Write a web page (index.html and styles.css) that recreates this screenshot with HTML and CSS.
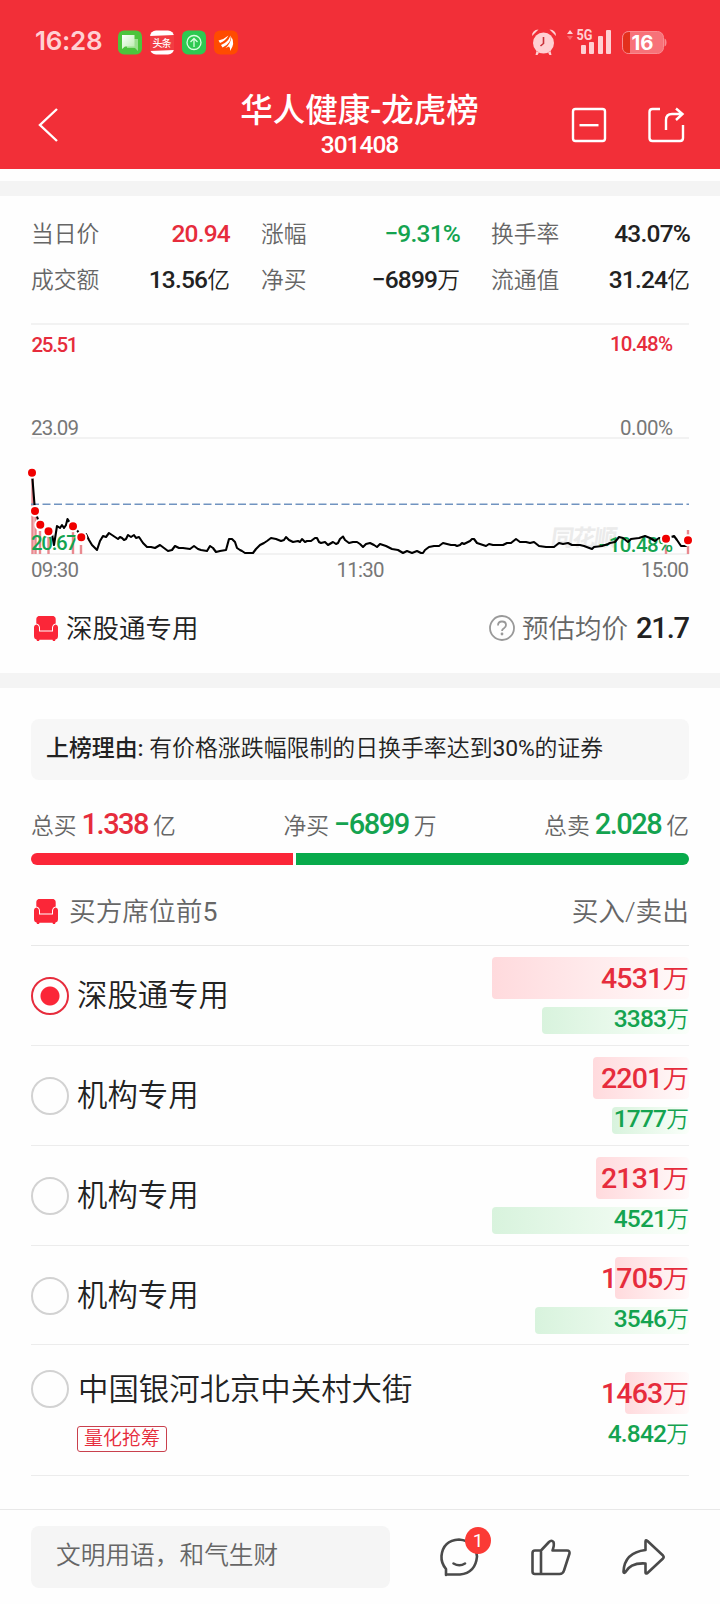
FILE: index.html
```
<!DOCTYPE html>
<html lang="zh-CN">
  <head>
    <meta charset="utf-8">
    <title>华人健康-龙虎榜</title>
    <link rel="stylesheet" href="styles.css">
  </head>
  <body>
    <header>
      <div class="status">
        <span class="clock">16:28</span>
        <svg class="apps" width="122" height="26" viewBox="117 28 122 26">
          <defs>
            <linearGradient id="bubble" x1="0" y1="0" x2="1" y2="1">
              <stop offset="0" stop-color="#fff"/>
              <stop offset="1" stop-color="#b9ecae"/>
            </linearGradient>
          </defs>
          <rect x="118" y="29.500" width="24" height="24" rx="6" fill="#4cc43c"/>
          <path d="M127 38h11v12l-3-3h-8z" fill="#9be08f"/>
          <path d="M122 34h12.500v11.500H125l-3 2.500z" fill="url(#bubble)"/>
          <rect x="150" y="29.500" width="24" height="24" rx="6" fill="#fff"/>
          <path d="M150 35l24-1v15l-24 1z" fill="#f23c42"/>
          <text class="app-name" x="152.500" y="46" textLength="19">头条</text>
          <rect x="182" y="29.500" width="24" height="24" rx="6" fill="#2ec951"/>
          <g fill="none" stroke="#d8ffe0" stroke-width="1.300">
            <circle cx="194" cy="41.500" r="7"/>
            <path d="M194 46v-8.500M190.500 41l3.500-3.500 3.500 3.500"/>
          </g>
          <rect x="214" y="29.500" width="24" height="24" rx="6" fill="#ff4b00"/>
          <path d="M218.500 39.500q6-1.500 10-5-3 5.500-8.500 7.500zM221 44q7-2.500 9.500-9.500 1.500 7.500-8 12zM225.500 47q5-4 6-11 4 6.500-1.500 14 .500-3.500-1-4.500z" fill="#fff"/>
        </svg>
        <svg class="signal" width="138" height="30" viewBox="530 26 138 30">
          <g fill="#ffd0d3">
            <circle cx="543.500" cy="42" r="10.500"/>
            <path d="M532 35q0-6 6.500-6.500zM556 35q0-6-6.500-6.500z"/>
            <path d="M536.500 50l2.500 1.500-1.500 2.500-2 0zM550.500 50l-2.500 1.500 1.500 2.500 2 0z"/>
            <path d="M567 33l3-4 3 4z"/>
            <rect x="581" y="44" width="5" height="9" rx="1"/>
            <rect x="589" y="41" width="5" height="12" rx="1"/>
            <rect x="598" y="35" width="5" height="18" rx="1"/>
            <rect x="606" y="29" width="5" height="24" rx="1"/>
          </g>
          <path d="M543.500 36v6.500l-3 2.500" fill="none" stroke="#c9313a" stroke-width="1.600"/>
          <path d="M567 35l3 4 3-4z" fill="#f8686e"/>
          <text class="net" x="576.500" y="38.500" textLength="16" lengthAdjust="spacingAndGlyphs">5G</text>
          <rect x="622.500" y="30.500" width="41" height="22" rx="6" fill="#f77279" stroke="#f98b90"/>
          <path d="M630 31v21h-1q-6 0-6-6v-9q0-6 6-6z" fill="#e2301c"/>
          <path d="M664.500 37.500q2 .500 2 4t-2 4z" fill="#f98b90"/>
          <text class="charge" x="631.500" y="49" textLength="22" lengthAdjust="spacingAndGlyphs">16</text>
        </svg>
      </div>
      <div class="nav">
        <svg class="back" width="22" height="38" viewBox="37 106 22 38">
          <path d="M57 109L40 125l17 16"/>
        </svg>
        <div class="title">
          <h1>华人健康-龙虎榜</h1>
          <p>301408</p>
        </div>
        <svg class="nav-icons" width="114" height="38" viewBox="571 106 114 38">
          <rect x="573" y="109" width="32" height="32" rx="2.500"/>
          <path d="M579.500 125.200h19"/>
          <path d="M660 109h-7.500q-3 0-3 3v26q0 3 3 3h27.500q3 0 3-3v-13"/>
          <path d="M666 130v-10q0-6 6-6h10M676 108.500l6.500 5.500-6.500 6"/>
        </svg>
      </div>
    </header>
    <div class="gap"></div>

    <section class="quote">
      <dl>
        <div><dt>当日价</dt><dd class="buy">20.94</dd></div>
        <div><dt>涨幅</dt><dd class="sell">−9.31%</dd></div>
        <div><dt>换手率</dt><dd>43.07%</dd></div>
        <div><dt>成交额</dt><dd>13.56<small>亿</small></dd></div>
        <div><dt>净买</dt><dd>−6899<small>万</small></dd></div>
        <div><dt>流通值</dt><dd>31.24<small>亿</small></dd></div>
      </dl>
      <svg class="chart" width="658" height="260" viewBox="31 323 658 260">
        <g class="grid">
          <path d="M31 324h658M31 438h658M31 554h658"/>
        </g>
        <text class="watermark" transform="translate(550 546) skewX(-8)" textLength="66">同花顺</text>
        <g class="volume">
          <path d="M32.500 478v76M35.500 516v38M40 531v23M48.500 536v18M73 532v22M81 545v9M666 545v9M688 530v24"/>
        </g>
        <g class="labels">
          <text class="up" x="31.500" y="352" textLength="47">25.51</text>
          <text class="up" x="610" y="350.500" textLength="63">10.48%</text>
          <text x="31" y="435" textLength="48">23.09</text>
          <text x="620" y="435" textLength="53">0.00%</text>
          <text class="down" x="31" y="549.500" textLength="47">20.67</text>
          <text class="down" x="598" y="551.500" textLength="75">−10.48%</text>
          <text x="31" y="577" textLength="48">09:30</text>
          <text x="336.500" y="577" textLength="48">11:30</text>
          <text x="641" y="577" textLength="48">15:00</text>
        </g>
        <path class="average" d="M31 504.300h658"/>
        <polyline class="price" points="32,473 35,511 40,525 48,531 52,534 54,545 57,526 60,528 62,525 64,528 66,525 67.500,519 70,523 73,526 77,530 81,537 83,535 86,534 89,540 92,545 97,550 100,541 103,536 106,537 109,533 112,535 115,537 118,539 120,537 122,538 124,540 126,539 128,535 131,537 134,535 136,538 139,537 143,543 147,547 151,547 155,548 160,545 164,548 168,551 172,550 175,546 179,548 183,548 190,549 194,546 198,549 201,550 207,551 210,546 213,548 216,552 220,551 226,550 229,539 232,539 235,542 237,548 240,550 242,551 245,553 253,553 256,549 260,545 264,543 267,541 271,538 276,539 281,541 284,540 286,537 289,540 293,542 298,541 300,542 302,539 305,542 307,541 311,541 315,538 317,538 319,542 321,543 325,542 328,545 333,542 336,544 338,543 340,539 343,536.500 345,540 349,543 353,542 357,542 360,544 363,547 366,544 370,543 374,545 377,547 380,544 386,546 392,549 398,550 403,553 407,551 412,553 417,551 421,553 423,553 425,550 429,547 434,546 439,546 443,543 447,544 451,545 455,545 457,546 460,545 462,543 464,544 470,541 472,539 474,539 477,543 480,544 486,546 489,544 493,545 503,545 507,543 511,543 516,539 520,542 526,542 530,543 534,542 539,546 546,547 554,547 559,543 563,544 568,543 572,545 580,545 584,546 592,549 594,547 602,546 608,544 610,543 615,542 619,537 623,538 628,542 631,539 639,538 645,536 650,538 655,541 659,538 666,539 674,536 677,540 681,546 686,546 688,540"/>
        <g class="trades">
          <circle cx="32" cy="472.700" r="5"/>
          <circle cx="35" cy="511" r="5"/>
          <circle cx="40.300" cy="524.700" r="5"/>
          <circle cx="48.500" cy="531.300" r="5"/>
          <circle cx="73" cy="526.200" r="5"/>
          <circle cx="81.300" cy="537.200" r="5"/>
          <circle cx="666" cy="538.800" r="5"/>
          <circle cx="688" cy="540.200" r="5"/>
        </g>
      </svg>
      <div class="seat">
        <svg class="sofa" width="24" height="25" viewBox="0 0 24 25">
          <path d="M4.500 0h15q2.500 1 2.200 4v3.500q-3.200.500-3.700 4v3H6v-3q-.500-3.500-3.700-4V4Q2 1 4.500 0z"/>
          <path d="M2.300 8.500Q5 9 5 12v3.500h14V12q0-3 2.700-3.500Q24 9 24 11v9q0 3-2.500 3.500l-.500 1.500h-2l-.500-1.300h-13L5 25H3l-.500-1.500Q0 23 0 20v-9q0-2 2.300-2.500z"/>
        </svg>
        <span class="seat-name">深股通专用</span>
        <svg class="ask" width="28" height="28" viewBox="0 0 28 28">
          <circle cx="14" cy="14" r="12"/>
          <path d="M10 11.500q0-4 4-4t4 3.500q0 2-2 3.200t-2 2.800"/>
          <circle class="ask-dot" cx="14" cy="20" r="1.400"/>
        </svg>
        <span class="cost">预估均价</span><b>21.7</b>
      </div>
    </section>
    <div class="gap"></div>

    <section class="board">
      <p class="reason"><b>上榜理由:</b> 有价格涨跌幅限制的日换手率达到<span class="num">30%</span>的证券</p>
      <div class="totals">
        <span>总买<b class="buy">1.338</b>亿</span>
        <span>净买<b class="sell">−6899</b>万</span>
        <span>总卖<b class="sell">2.028</b>亿</span>
      </div>
      <div class="ratio"><i style="width: 262px"></i><i></i></div>
      <div class="head">
        <svg class="sofa" width="24" height="25" viewBox="0 0 24 25">
          <path d="M4.500 0h15q2.500 1 2.200 4v3.500q-3.200.500-3.700 4v3H6v-3q-.500-3.500-3.700-4V4Q2 1 4.500 0z"/>
          <path d="M2.300 8.500Q5 9 5 12v3.500h14V12q0-3 2.700-3.500Q24 9 24 11v9q0 3-2.500 3.500l-.500 1.500h-2l-.500-1.300h-13L5 25H3l-.500-1.500Q0 23 0 20v-9q0-2 2.300-2.500z"/>
        </svg>
        <span class="head-name">买方席位前<span class="num">5</span></span>
        <span>买入/卖出</span>
      </div>
      <ul>
        <li>
          <i class="radio on"></i>
          <div class="name">深股通专用</div>
          <div class="amounts">
            <div class="in"><i style="width: 197px"></i><span>4531<small>万</small></span></div>
            <div class="out"><i style="width: 147px"></i><span>3383<small>万</small></span></div>
          </div>
        </li>
        <li>
          <i class="radio"></i>
          <div class="name">机构专用</div>
          <div class="amounts">
            <div class="in"><i style="width: 96px"></i><span>2201<small>万</small></span></div>
            <div class="out"><i style="width: 77px"></i><span>1777<small>万</small></span></div>
          </div>
        </li>
        <li>
          <i class="radio"></i>
          <div class="name">机构专用</div>
          <div class="amounts">
            <div class="in"><i style="width: 93px"></i><span>2131<small>万</small></span></div>
            <div class="out"><i style="width: 197px"></i><span>4521<small>万</small></span></div>
          </div>
        </li>
        <li>
          <i class="radio"></i>
          <div class="name">机构专用</div>
          <div class="amounts">
            <div class="in"><i style="width: 74px"></i><span>1705<small>万</small></span></div>
            <div class="out"><i style="width: 154px"></i><span>3546<small>万</small></span></div>
          </div>
        </li>
        <li class="tagged">
          <i class="radio"></i>
          <div class="name">中国银河北京中关村大街<span class="tag">量化抢筹</span></div>
          <div class="amounts">
            <div class="in"><i style="width: 64px"></i><span>1463<small>万</small></span></div>
            <div class="out"><span>4.842<small>万</small></span></div>
          </div>
        </li>
      </ul>
    </section>

    <footer>
      <div class="comment">文明用语，和气生财</div>
      <div class="action">
        <svg width="40" height="40" viewBox="438 1537 40 40">
          <path d="M446 1575v-6Q441 1563 441.500 1556Q443 1540.500 459 1539.500Q475.500 1541 477 1556.500Q475.500 1573 460 1574.500H446"/>
          <path d="M453.500 1563.500q6 3.500 11.500 0"/>
        </svg>
        <span class="badge">1</span>
      </div>
      <div class="action">
        <svg width="44" height="40" viewBox="530 1537 44 40">
          <path d="M541 1550.500h-6q-2.500 0-2.500 2.500v18.500q0 2.500 2.500 2.500h24.500q3.500 0 4.500-3.500l5.500-17q.500-3-2.500-3h-14.500q2-5.500 1-8.500-2-2.500-4.500 0zM541 1550.500v23.500"/>
        </svg>
      </div>
      <div class="action">
        <svg width="46" height="40" viewBox="620 1537 46 40">
          <path d="M645.500 1550v-8.500q0-2 2-.500l15.500 14.500q1.300 1.500 0 3l-15.500 14.500q-2 1-2-.500v-9q-15-1-20.500 9-1.500 1-1.500-1 1-19 22-21.500z"/>
        </svg>
      </div>
    </footer>
  </body>
</html>
```
FILE: styles.css
```
* { box-sizing: border-box; }
body {
  margin: 0;
  width: 720px;
  height: 1604px;
  overflow: hidden;
  background: #fefefe;
  color: #222;
  font-family: Roboto, "Noto Sans CJK SC", sans-serif;
  font-weight: 350;
}
h1, p, dl, dd, ul { margin: 0; padding: 0; }
ul { list-style: none; }
svg { display: block; overflow: visible; }
small { font-size: 93%; font-weight: 350; letter-spacing: 0; }
.num { font-weight: 400; letter-spacing: -0.2px; }
.buy { color: #e62c3c; }
.sell { color: #14a350; }

header { height: 169px; background: #f22f38; color: #fff; }
.status { display: flex; align-items: center; height: 83px; padding-left: 35px; }
.clock {
  width: 82px;
  padding-bottom: 1px;
  font: 600 26px/30px Inter, sans-serif;
  letter-spacing: -0.3px;
  color: #ffd0d3;
}
.signal { margin-left: 291px; }
.app-name { font-size: 10px; font-weight: 500; fill: #fff; }
.net { font-size: 14px; font-weight: 700; fill: #ffd0d3; }
.charge { font: 700 20px Inter, sans-serif; fill: #fff; }
.nav { display: flex; align-items: center; height: 84px; padding-left: 37px; }
.nav svg { fill: none; stroke: #fff; stroke-width: 2.4; }
.title { flex: 1; padding: 3px 0 0 89px; text-align: center; }
.title h1 { font-size: 32.5px; line-height: 36px; font-weight: 500; white-space: nowrap; }
.title p { font-size: 24.5px; line-height: 32px; font-weight: 500; letter-spacing: -1px; }
.title + .nav-icons { margin: 0 35px 0 0; }

.gap { height: 15px; background: #f4f4f4; }
header + .gap { margin-top: 12px; }

.quote { height: 477px; padding: 15px 31px 0; }
.quote dl {
  display: grid;
  grid-template-columns: 199px 199px 199px;
  column-gap: 31px;
  grid-auto-rows: 46px;
}
.quote dl div { display: flex; justify-content: space-between; line-height: 46px; }
dt { padding-top: 1px; font-size: 22.8px; color: #666; }
dd { font-size: 24.5px; font-weight: 500; letter-spacing: -0.8px; }
.chart { margin-top: 20px; }
.grid path { stroke: #f2f2f2; stroke-width: 2; }
.labels { font-size: 20.5px; font-weight: 400; fill: #777; }
.labels .up { fill: #e62c3c; font-weight: 500; }
.labels .down { fill: #14a350; font-weight: 500; }
.watermark { font-size: 23px; font-weight: 700; fill: #ebebeb; }
.volume path { stroke: #e98a90; stroke-width: 2.4; }
.average { stroke: #7093c0; stroke-width: 1.5; stroke-dasharray: 8 3.5; }
.price { fill: none; stroke: #000; stroke-width: 2.1; stroke-linejoin: round; }
.trades circle { fill: #f00000; stroke: #fff; stroke-width: 2; }

.seat { display: flex; align-items: center; height: 40px; margin-top: 25px; padding-left: 3px; }
.sofa { fill: #fb2638; }
.seat-name { flex: 1; margin: -4px 0 0 8px; font-size: 26.5px; }
.ask { margin-right: 6px; fill: none; stroke: #999; stroke-width: 1.8; }
.ask .ask-dot { fill: #999; stroke: none; }
.cost { margin-top: -4px; font-size: 26.5px; color: #666; }
.seat b { margin: -1px 0 0 8px; font-size: 29px; font-weight: 500; letter-spacing: -1.1px; }

.board { padding: 31px 31px 0; }
.reason {
  height: 61px;
  padding-left: 15px;
  border-radius: 8px;
  background: #f7f7f7;
  font-size: 22.9px;
  line-height: 59px;
  white-space: nowrap;
}
.reason b { font-weight: 500; }
.totals {
  display: flex;
  justify-content: space-between;
  height: 73px;
  line-height: 89px;
  font-size: 22.8px;
  color: #666;
}
.totals b { margin: 0 5px; font-size: 29px; font-weight: 500; letter-spacing: -1.5px; }
.ratio { display: flex; gap: 3px; height: 12px; }
.ratio i { background: #fb2638; border-radius: 6px 0 0 6px; }
.ratio i + i { flex: 1; background: #08aa4b; border-radius: 0 6px 6px 0; }
.head {
  display: flex;
  align-items: center;
  height: 81px;
  padding: 13px 0 0 3px;
  border-bottom: 1px solid #e8e8e8;
  font-size: 26.7px;
  color: #666;
}
.head > span { margin-top: -5px; }
.head .head-name { flex: 1; margin-left: 11px; }

li {
  display: flex;
  height: 100px;
  padding-top: 11px;
  border-bottom: 1px solid #ececec;
}
li:nth-child(4) { height: 99px; }
.radio {
  width: 38px;
  height: 38px;
  margin-top: 20px;
  border: 2.5px solid #d2d2d2;
  border-width: 2.5px;
  border-radius: 50%;
}
.radio.on {
  border-color: #e62c3c;
  background: radial-gradient(circle, #fb2638 9px, transparent 10px);
}
.name { flex: 1; margin-left: 8px; font-size: 30.4px; line-height: 78px; }
.amounts { width: 197px; }
.amounts div { display: grid; justify-items: end; align-items: center; }
.amounts i, .amounts span { grid-area: 1 / 1; }
.amounts i { height: 100%; border-radius: 4px; }
.in { height: 42px; margin-bottom: 8px; font-size: 28.5px; line-height: 38px; font-weight: 500; color: #e62c3c; letter-spacing: -0.8px; }
.in i { background: linear-gradient(to right, #ffdadd, #fffafa); }
.out { height: 27px; font-size: 24.5px; line-height: 25px; font-weight: 500; color: #14a350; letter-spacing: -0.8px; }
.in span { margin-top: 1px; }
.out span { margin-top: -3px; }
.out i { background: linear-gradient(to right, #d8f3dd, #fafffa); }
li.tagged { height: 131px; padding-top: 27px; }
.tagged .radio { margin-top: -2px; }
.tagged .name { margin: -1px 0 0 9px; line-height: 38px; }
.tag {
  display: block;
  width: 90px;
  height: 26px;
  margin: 17px 0 0 -1px;
  border: 1px solid #c9404d;
  border-radius: 3px;
  font-size: 19px;
  line-height: 24px;
  text-align: center;
  color: #e62c3c;
}

footer {
  display: flex;
  height: 95px;
  margin-top: 33px;
  padding: 16px 31px 0;
  border-top: 1px solid #e8e8e8;
}
.comment {
  width: 359px;
  height: 62px;
  padding-left: 25px;
  border-radius: 8px;
  background: #f5f5f5;
  font-size: 24.7px;
  line-height: 60px;
  color: #666;
}
.action { position: relative; margin: 11px 0 0 48px; }
.action svg { fill: none; stroke: #4a4a4a; stroke-width: 2.6; stroke-linejoin: round; stroke-linecap: round; }
.action + .action { margin-left: 52px; }
.action + .action + .action { margin-left: 46px; }
.badge {
  position: absolute;
  left: 27px;
  top: -10px;
  width: 26px;
  height: 27px;
  border-radius: 50%;
  background: #fb3a35;
  font-size: 19px;
  line-height: 27px;
  text-align: center;
  font-weight: 400;
  color: #fff;
}
```
